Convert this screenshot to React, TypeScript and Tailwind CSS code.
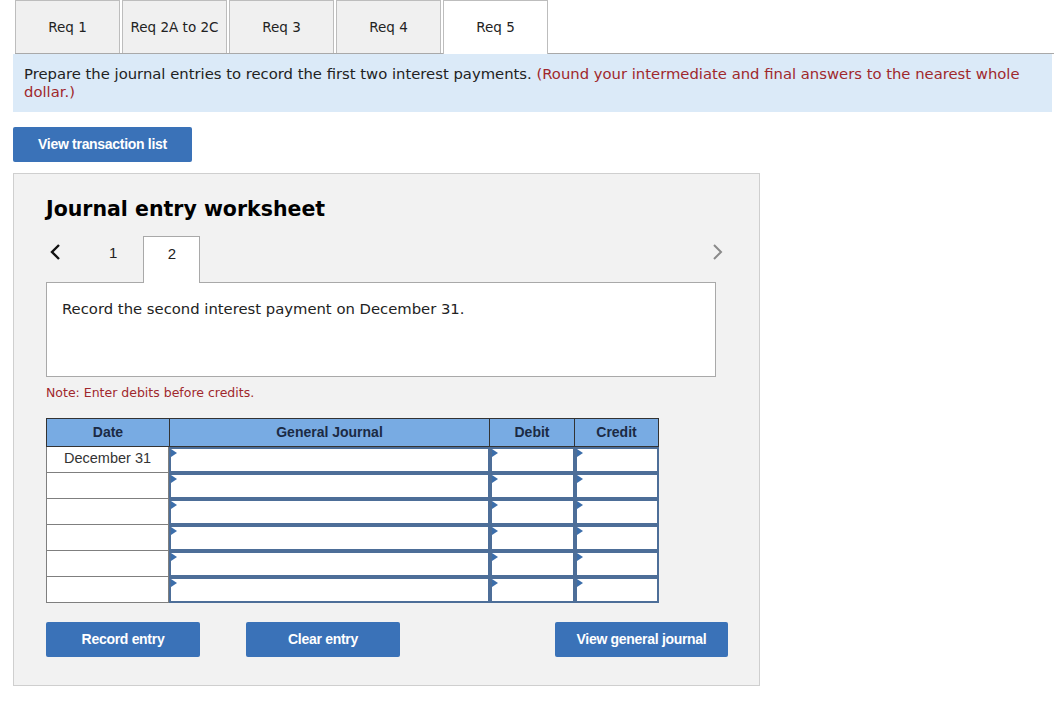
import React from 'react';

const verdana = { fontFamily: '"DejaVu Sans", Verdana, sans-serif' };
const arial = { fontFamily: '"Liberation Sans", Arial, sans-serif' };

const tabs = ['Req 1', 'Req 2A to 2C', 'Req 3', 'Req 4', 'Req 5'];

function InputCell({ w }: { w: string }) {
  return (
    <div className={`relative h-[26px] ${w} border-2 border-[#4d6e98] bg-white`}>
      <span className="absolute left-0 top-0 h-0 w-0 border-y-[4px] border-l-[6px] border-y-transparent border-l-[#3c6eaa]" />
    </div>
  );
}

export default function App() {
  const rows = ['December 31', '', '', '', '', ''];

  return (
    <div className="min-h-screen w-[1054px] bg-white" style={verdana}>
      {/* Tabs */}
      <div className="ml-[15px] flex h-[54px] items-end gap-[2px] border-b border-[#a9a9a9]">
        {tabs.map((t, i) =>
          i === 4 ? (
            <div
              key={t}
              className="relative -mb-px flex h-[54px] w-[105px] items-center justify-center border border-b-0 border-[#bdbdbd] bg-white text-[13.5px] text-[#222]"
            >
              {t}
            </div>
          ) : (
            <div
              key={t}
              className="flex h-[53px] w-[105px] items-center justify-center border border-b-0 border-[#bdbdbd] bg-[#f0f0f0] text-[13.5px] text-[#222]"
            >
              {t}
            </div>
          )
        )}
      </div>

      <div className="pl-[13px]">
        {/* Instructions */}
        <p className="w-[1039px] bg-[#dbeaf8] px-[11px] pb-[11px] pt-[11px] text-[14.8px] leading-[18px] text-[#222]">
          Prepare the journal entries to record the first two interest payments.{' '}
          <span className="text-[#a0282c]">
            (Round your intermediate and final answers to the nearest whole dollar.)
          </span>
        </p>

        <button
          className="mt-[15px] h-[35px] w-[179px] rounded-[2px] bg-[#3a72b8] text-[14px] font-bold tracking-[-0.3px] text-white"
          style={arial}
        >
          View transaction list
        </button>

        {/* Worksheet panel */}
        <div className="mt-[11px] h-[513px] w-[747px] border border-[#cfcfcf] bg-[#f2f2f2] pl-[32px] pt-[22px]">
          <h2 className="text-[20.5px] font-bold leading-[26px] text-black">Journal entry worksheet</h2>

          {/* Nav */}
          <div className="relative mt-[14px] flex h-[46px] w-[669px] items-start">
            <svg className="mt-[7px] ml-[4px]" width="12" height="18" viewBox="0 0 12 18">
              <path d="M9 2 L2 9 L9 16" fill="none" stroke="#111" strokeWidth="2.4" />
            </svg>
            <span className="ml-[47px] mt-[6px] text-[15px] text-[#222]" style={arial}>
              1
            </span>
            <div
              className="relative z-10 ml-[26px] flex h-[47px] w-[57px] justify-center border border-b-0 border-[#a9a9a9] bg-white pt-[6px] text-[15px] text-[#222]"
              style={arial}
            >
              2
            </div>
            <svg className="absolute right-[-8px] top-[7px]" width="12" height="18" viewBox="0 0 12 18">
              <path d="M3 2 L10 9 L3 16" fill="none" stroke="#8a8a8a" strokeWidth="2" />
            </svg>
          </div>

          <div className="h-[95px] w-[670px] border border-[#a9a9a9] bg-white px-[15px] pt-[15px] text-[14.8px] text-[#222]">
            Record the second interest payment on December 31.
          </div>

          <p className="mt-[7px] text-[12.5px] text-[#a0282c]">Note: Enter debits before credits.</p>

          {/* Table */}
          <div className="mt-[15px] w-[613px]" style={arial}>
            <div className="flex h-[29px] border border-[#333] bg-[#78abe3] text-[14px] font-bold text-[#1b2a44]">
              <div className="flex w-[123px] items-center justify-center border-r border-[#333]">Date</div>
              <div className="flex w-[320px] items-center justify-center border-r border-[#333]">General Journal</div>
              <div className="flex w-[85px] items-center justify-center border-r border-[#333]">Debit</div>
              <div className="flex flex-1 items-center justify-center">Credit</div>
            </div>
            {rows.map((d, i) => (
              <div key={i} className="flex">
                <div className="flex h-[26px] w-[123px] items-center justify-center border-x border-b border-[#7f7f7f] bg-white text-[14.5px] text-[#333]">
                  {d}
                </div>
                <InputCell w="w-[321px]" />
                <InputCell w="w-[85px]" />
                <InputCell w="w-[84px]" />
              </div>
            ))}
          </div>

          {/* Buttons */}
          <div className="mt-[19px] flex w-[682px]" style={arial}>
            <button className="h-[35px] w-[154px] rounded-[2px] bg-[#3a72b8] text-[14px] font-bold tracking-[-0.3px] text-white">
              Record entry
            </button>
            <button className="ml-[46px] h-[35px] w-[154px] rounded-[2px] bg-[#3a72b8] text-[14px] font-bold tracking-[-0.3px] text-white">
              Clear entry
            </button>
            <button className="ml-auto h-[35px] w-[173px] rounded-[2px] bg-[#3a72b8] text-[14px] font-bold tracking-[-0.3px] text-white">
              View general journal
            </button>
          </div>
        </div>
      </div>
    </div>
  );
}
